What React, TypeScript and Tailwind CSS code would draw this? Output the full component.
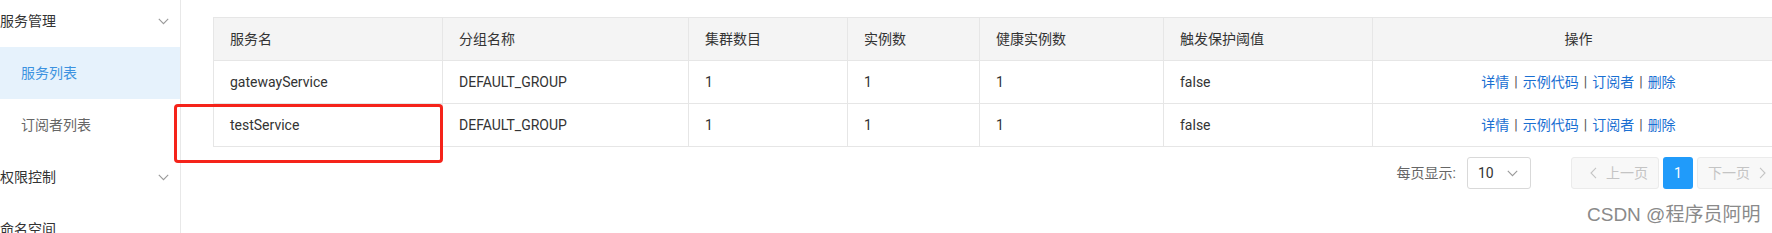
import React from "react";

const FONT = "font-['Roboto','Noto_Sans_CJK_SC',sans-serif]";

function ChevronDown({ className = "" }: { className?: string }) {
  return (
    <svg width="11" height="7" viewBox="0 0 11 7" className={className} fill="none">
      <path d="M0.8 0.9 L5.5 5.6 L10.2 0.9" stroke="currentColor" strokeWidth="1.1" />
    </svg>
  );
}

function ChevronLeft({ className = "" }: { className?: string }) {
  return (
    <svg width="7" height="12" viewBox="0 0 7 12" className={className} fill="none">
      <path d="M6 0.8 L1 6 L6 11.2" stroke="currentColor" strokeWidth="1.1" />
    </svg>
  );
}

function ChevronRight({ className = "" }: { className?: string }) {
  return (
    <svg width="7" height="12" viewBox="0 0 7 12" className={className} fill="none">
      <path d="M1 0.8 L6 6 L1 11.2" stroke="currentColor" strokeWidth="1.1" />
    </svg>
  );
}

const headers = ["服务名", "分组名称", "集群数目", "实例数", "健康实例数", "触发保护阈值", "操作"];
const rows = [
  ["gatewayService", "DEFAULT_GROUP", "1", "1", "1", "false"],
  ["testService", "DEFAULT_GROUP", "1", "1", "1", "false"],
];

function Ops() {
  const items = ["详情", "示例代码", "订阅者", "删除"];
  return (
    <div className="flex items-center justify-center">
      {items.map((t, i) => (
        <React.Fragment key={t}>
          {i > 0 && <span className="mx-[5px] text-[#555]">|</span>}
          <span className="text-[#1a6fd2]">{t}</span>
        </React.Fragment>
      ))}
    </div>
  );
}

export default function App() {
  return (
    <div className={`relative flex w-[1772px] h-[233px] overflow-hidden bg-white text-[14px] text-[#333] ${FONT}`}>
      {/* Sidebar */}
      <div className="w-[181px] shrink-0 border-r border-[#e8e8e8]">
        <div className="-mt-[5px] flex flex-col">
          <div className="h-[52px] flex items-center justify-between pr-[11px] text-[#333]">
            <span>服务管理</span>
            <ChevronDown className="text-[#999]" />
          </div>
          <div className="h-[52px] flex items-center pl-[21px] bg-[#e6f2fc] text-[#3c92e0]">服务列表</div>
          <div className="h-[52px] flex items-center pl-[21px] text-[#666]">订阅者列表</div>
          <div className="h-[52px] flex items-center justify-between pr-[11px] text-[#333]">
            <span>权限控制</span>
            <ChevronDown className="text-[#999]" />
          </div>
          <div className="h-[52px] flex items-center text-[#333]">命名空间</div>
        </div>
      </div>

      {/* Main */}
      <div className="shrink-0 w-[1604px] pl-[32px] pt-[17px]">
        <div className="grid grid-cols-[229px_246px_159px_132px_184px_209px_412px] border-l border-t border-[#e6e6e6]">
          {headers.map((h, i) => (
            <div
              key={h}
              className={`h-[43px] flex items-center border-r border-b border-[#e6e6e6] bg-[#f4f4f4] ${
                i === 6 ? "justify-center" : "pl-4"
              }`}
            >
              {h}
            </div>
          ))}
          {rows.map((r, ri) => (
            <React.Fragment key={ri}>
              {r.map((c, ci) => (
                <div key={ci} className="h-[43px] flex items-center pl-4 border-r border-b border-[#e6e6e6]">
                  {c}
                </div>
              ))}
              <div className="h-[43px] flex items-center justify-center border-r border-b border-[#e6e6e6]">
                <Ops />
              </div>
            </React.Fragment>
          ))}
        </div>

        {/* Pagination */}
        <div className="mt-[10px] flex items-center justify-end">
          <span className="text-[#666] mr-[11px]">每页显示:</span>
          <div className="w-[64px] h-[32px] flex items-center justify-between pl-[10px] pr-[12px] border border-[#d9d9d9] rounded-[3px] text-[#333]">
            <span>10</span>
            <ChevronDown className="text-[#999]" />
          </div>
          <div className="ml-[40px] w-[88px] h-[32px] flex items-center pl-[18px] gap-[9px] border border-[#ebebeb] bg-[#f8f8f8] rounded-[3px] text-[#c4c4c4]">
            <ChevronLeft />
            <span>上一页</span>
          </div>
          <div className="ml-[4px] w-[30px] h-[32px] flex items-center justify-center bg-[#209bfa] rounded-[3px] text-white">1</div>
          <div className="ml-[4px] w-[88px] h-[32px] flex items-center pl-[10px] gap-[9px] border border-[#ebebeb] bg-[#f8f8f8] rounded-[3px] text-[#c4c4c4]">
            <span>下一页</span>
            <ChevronRight />
          </div>
        </div>
      </div>

      {/* Red annotation box */}
      <div className="absolute left-[174px] top-[104px] w-[269px] h-[59px] border-[3px] border-[#f5231a] rounded-[4px]" />

      {/* Watermark */}
      <div className="absolute left-[1587px] top-[203px] text-[19px] leading-[24px] text-[#8a8a8a] font-['Liberation_Sans','Noto_Sans_CJK_SC',sans-serif] whitespace-nowrap">
        CSDN @程序员阿明
      </div>
    </div>
  );
}
